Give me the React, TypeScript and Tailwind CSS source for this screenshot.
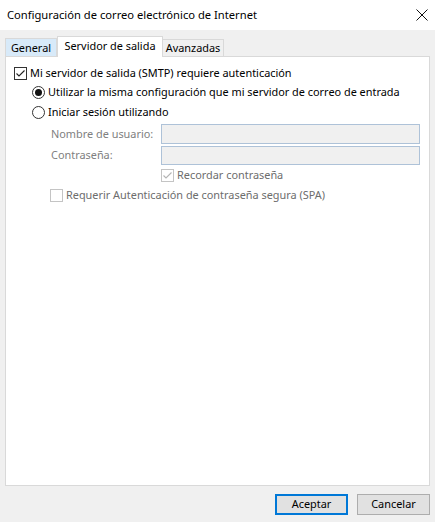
import React from 'react'

const Check = ({ checked, disabled }: { checked?: boolean; disabled?: boolean }) => (
  <span
    className={`w-[13px] h-[13px] shrink-0 border bg-white flex items-center justify-center ${
      disabled ? 'border-[#c4c4c4]' : 'border-[#333333]'
    }`}
  >
    {checked && (
      <svg width="11" height="11" viewBox="0 0 11 11">
        <path d="M1.5 5.5 L4 8 L9.5 2.5" fill="none" stroke={disabled ? '#b4b4b4' : '#222'} strokeWidth="1.1" />
      </svg>
    )}
  </span>
)

const Radio = ({ checked }: { checked?: boolean }) => (
  <span className="w-[13px] h-[13px] shrink-0 rounded-full border border-[#333333] bg-white flex items-center justify-center">
    {checked && <span className="w-[7px] h-[7px] rounded-full bg-[#111]" />}
  </span>
)

const App = () => {
  return (
    <div className="w-[435px] h-[522px] bg-[#f0f0f0] flex flex-col text-[10.9px] text-black font-['Segoe_UI','Noto_Sans',sans-serif] whitespace-nowrap">
      <div className="h-[30px] bg-white flex items-center justify-between pl-[7px] pr-[7px]">
        <span className="text-[11.2px] leading-none">Configuración de correo electrónico de Internet</span>
        <svg width="12" height="12" viewBox="0 0 12 12">
          <path d="M0.5 0.5 L11.5 11.5 M11.5 0.5 L0.5 11.5" stroke="#111" strokeWidth="1" />
        </svg>
      </div>

      <div className="flex-1 flex flex-col pt-[6px] px-[5px]">
        <div className="h-[20px] flex items-end">
          <div className="h-[18px] w-[52px] bg-[#d8eaf9] border border-b-0 border-[#d9d9d9] flex items-center justify-center leading-none pt-[1px]">
            General
          </div>
          <div className="relative z-10 h-[21px] -mb-px w-[106px] bg-white border border-b-0 border-[#d9d9d9] flex items-start justify-center leading-none pt-[4px]">
            Servidor de salida
          </div>
          <div className="h-[17px] w-[61px] bg-[#f0f0f0] border border-b-0 border-l-0 border-[#d9d9d9] flex items-center justify-center leading-none pt-[1px]">
            Avanzadas
          </div>
        </div>

        <div className="flex-1 bg-white border border-[#d9d9d9] pt-[6px] pl-[8px] flex flex-col">
          <div className="h-[20px] flex items-center gap-[3px]">
            <Check checked />
            <span>Mi servidor de salida (SMTP) requiere autenticación</span>
          </div>
          <div className="h-[19px] flex items-center gap-[3px] pl-[18px]">
            <Radio checked />
            <span>Utilizar la misma configuración que mi servidor de correo de entrada</span>
          </div>
          <div className="h-[20px] flex items-center gap-[3px] pl-[18px]">
            <Radio />
            <span>Iniciar sesión utilizando</span>
          </div>
          <div className="mt-[2px] h-[20px] flex items-center pl-[37px]">
            <span className="w-[110px] text-[#808080]">Nombre de usuario:</span>
            <div className="w-[259px] h-[20px] bg-[#f0f0f0] border border-[#aec2d8]" />
          </div>
          <div className="mt-[2px] h-[19px] flex items-center pl-[37px]">
            <span className="w-[110px] text-[#808080]">Contraseña:</span>
            <div className="w-[259px] h-[19px] bg-[#f0f0f0] border border-[#aec2d8]" />
          </div>
          <div className="h-[20px] flex items-center gap-[3px] pl-[147px]">
            <Check checked disabled />
            <span className="text-[#6d6d6d]">Recordar contraseña</span>
          </div>
          <div className="h-[20px] flex items-center gap-[3px] pl-[36px]">
            <Check disabled />
            <span className="text-[#6d6d6d]">Requerir Autenticación de contraseña segura (SPA)</span>
          </div>
        </div>
      </div>

      <div className="h-[36px] flex items-center justify-end gap-[9px] pr-[5px]">
        <button className="w-[73px] h-[21px] bg-[#e1e1e1] border-2 border-[#0078d7] leading-none">Aceptar</button>
        <button className="w-[73px] h-[21px] bg-[#e1e1e1] border border-[#adadad] leading-none">Cancelar</button>
      </div>
    </div>
  )
}

export default App
